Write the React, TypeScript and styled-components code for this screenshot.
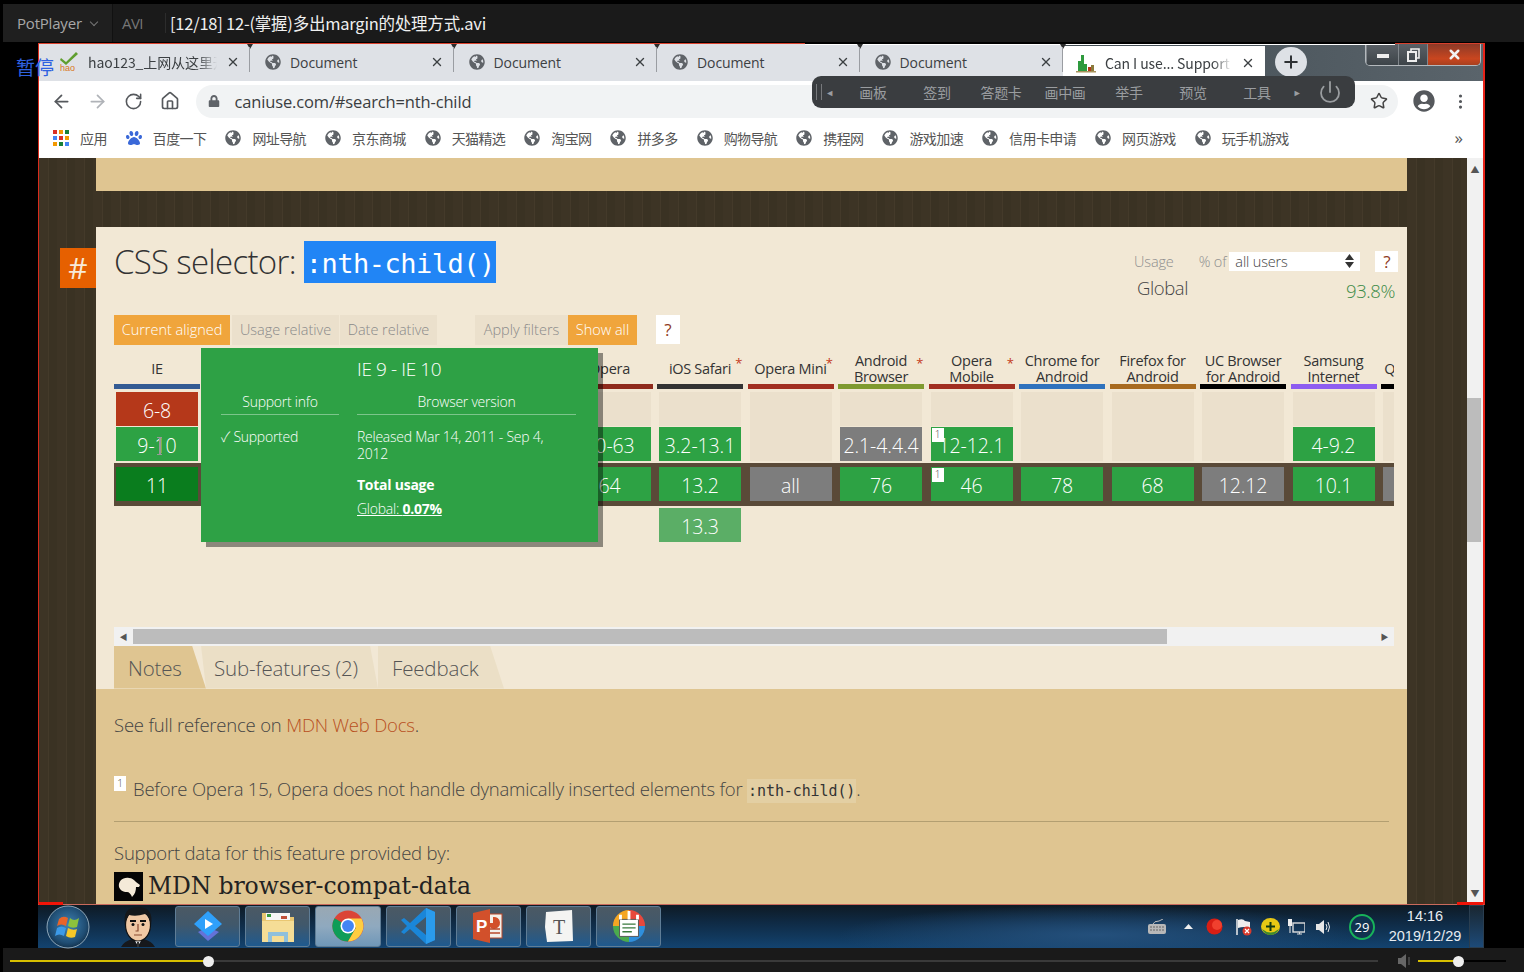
import React from "react";
import styled, { createGlobalStyle } from "styled-components";
import { ArrowLeft, ArrowRight, RotateCw, Home, Star, MoreVertical, Plus, X, Power } from "lucide-react";
import { FaGlobeAmericas, FaLock, FaUserCircle, FaPaw } from "react-icons/fa";

const SANS = `"Open Sans", "Noto Sans CJK SC", sans-serif`;
const CJK = `"Noto Sans CJK SC", "Open Sans", sans-serif`;

const GlobalStyle = createGlobalStyle`
  html, body { margin: 0; padding: 0; background: #000; }
  * { box-sizing: border-box; }
`;

const Screen = styled.div`
  position: relative;
  width: 1524px;
  height: 972px;
  background: #000;
  overflow: hidden;
  font-family: ${SANS};
`;

/* player title bar */
const TitleBar = styled.div`
  display: flex;
  align-items: center;
  height: 38px;
  margin: 4px 0 1px 3px;
  background: #1a1a1a;
  color: #fff;
`;
const PlayerMenu = styled.div`
  display: flex;
  align-items: center;
  gap: 9px;
  width: 110px;
  height: 100%;
  padding-left: 14px;
  background: #1f1f1f;
  border-right: 1px solid #111;
  color: #a8a8a8;
  font-size: 15px;
  letter-spacing: -0.2px;
`;
const Chevron = styled.span`
  width: 6px;
  height: 6px;
  margin-top: -3px;
  border-right: 1px solid #777;
  border-bottom: 1px solid #777;
  transform: rotate(45deg);
`;
const Format = styled.div`
  width: 44px;
  margin-left: 9px;
  border-right: 1px solid #2c2c2c;
  color: #767676;
  font-size: 15px;
  letter-spacing: -0.6px;
`;
const FileName = styled.div`
  margin-left: 4px;
  font-family: ${CJK};
  font-size: 16.5px;
  letter-spacing: -0.23px;
  color: #f0f0f0;
`;

/* captured desktop */
const Browser = styled.div`
  position: relative;
  display: flex;
  flex-direction: column;
  width: 1447px;
  height: 862px;
  margin-left: 38px;
  border-left: 1px solid #d92c1c;
  border-right: 2px solid #e8241a;
  border-top: 1.5px solid #d8402c;
  border-bottom: 1px solid #c96a5c;
  background: #fff;
`;
const CornerMark = styled.span<{ $side: "left" | "right" }>`
  position: absolute;
  bottom: -1px;
  ${(p) => p.$side}: 0;
  width: ${(p) => (p.$side === "left" ? 24 : 26)}px;
  height: 3px;
  background: #f01408;
`;
const RecordLine = styled.span`
  position: absolute;
  top: -1px;
  left: 766px;
  width: 590px;
  height: 2px;
  background: #fff;
  border-top: 1px solid #000;
`;

const TabStrip = styled.div`
  display: flex;
  height: 36.5px;
  background: linear-gradient(90deg, #1f2a31 0%, #4a565e 12%, #59646c 22%, #2d363c 45%, #3a444b 60%, #5a646b 100%);
`;
const TabRow = styled.div`
  display: flex;
  width: 1024px;
  padding-left: 21px;
  background: #dee1e6;
`;
const Tab = styled.div<{ $width: number }>`
  position: relative;
  display: flex;
  align-items: center;
  gap: 9px;
  width: ${(p) => p.$width}px;
  padding: 0 10px 0 15px;
  color: #3c4043;
  font-size: 14px;
  &::after {
    content: "";
    position: absolute;
    right: 0;
    top: 3px;
    bottom: 9px;
    width: 1px;
    background: #9a9da2;
  }
  &::before {
    content: "";
    position: absolute;
    right: -3px;
    top: 0;
    border: 3px solid transparent;
    border-top: 5px solid #2c2c2c;
    border-bottom: 0;
  }
`;
const FirstTab = styled(Tab)`
  padding-left: 0;
`;
const ActiveTab = styled.div`
  display: flex;
  align-items: center;
  gap: 9px;
  width: 202px;
  margin-top: 2px;
  padding: 0 10px 0 13px;
  background: #fff;
  color: #3c4043;
  font-size: 14px;
`;
const TabLabel = styled.span<{ $fade?: boolean }>`
  flex: 1;
  overflow: hidden;
  white-space: nowrap;
  letter-spacing: -0.1px;
  font-family: ${(p) => (p.$fade ? CJK : SANS)};
  ${(p) => p.$fade && "mask-image: linear-gradient(90deg, #000 85%, transparent 100%);"}
`;
const NewTab = styled.div`
  display: flex;
  align-items: center;
  justify-content: center;
  width: 32px;
  height: 30px;
  margin: 3px 0 0 10px;
  border-radius: 50%;
  background: #dee1e6;
  color: #2e3134;
`;
const WindowButtons = styled.div`
  display: flex;
  height: 22px;
  margin-left: auto;
  margin-right: 2px;
  border: 1px solid #b4b9bd;
  border-top: 0;
  border-radius: 0 0 5px 5px;
  overflow: hidden;
`;
const WindowButton = styled.div<{ $width: number; $close?: boolean }>`
  display: flex;
  align-items: center;
  justify-content: center;
  width: ${(p) => p.$width}px;
  border-left: 1px solid #80868b;
  background: ${(p) => (p.$close ? "linear-gradient(#8c3a28, #c9461f 70%, #a8401f)" : "linear-gradient(#5a6066, #3d4449)")};
  color: #f2f2f2;
`;
const MinimizeBar = styled.span`
  width: 12px;
  height: 4px;
  margin-top: 2px;
  background: #eee;
`;

const Toolbar = styled.div`
  display: flex;
  align-items: center;
  height: 41px;
  padding-left: 4px;
  background: #fff;
`;
const ToolButton = styled.div<{ $muted?: boolean }>`
  display: flex;
  align-items: center;
  justify-content: center;
  flex: none;
  width: 36.4px;
  color: ${(p) => (p.$muted ? "#b0b3b8" : "#55585c")};
`;
const AccountButton = styled(ToolButton)`
  margin-left: 8px;
`;
const Omnibox = styled.div`
  display: flex;
  align-items: center;
  gap: 15px;
  width: 1202px;
  height: 33px;
  margin-left: 7px;
  padding: 0 10px 0 12px;
  border-radius: 17px;
  background: #f1f3f4;
  color: #5f6368;
`;
const Url = styled.span`
  flex: 1;
  color: #3a3d40;
  font-size: 16.5px;
  letter-spacing: -0.15px;
`;
const Bookmarks = styled.div`
  display: flex;
  align-items: center;
  gap: 19px;
  height: 36px;
  padding: 0 0 4px 14px;
  background: #fff;
`;
const Bookmark = styled.div`
  display: flex;
  align-items: center;
  gap: 11px;
  flex: none;
  color: #555;
  font-family: ${CJK};
  font-size: 14px;
  letter-spacing: -0.6px;
`;
const More = styled.span`
  margin-left: auto;
  margin-right: 20px;
  color: #555;
  font-size: 17px;
`;

/* floating whiteboard bar and pause mark, both over the capture */
const FloatBar = styled.div`
  position: absolute;
  left: 773px;
  top: 32px;
  display: flex;
  align-items: center;
  width: 543px;
  height: 32px;
  padding-left: 4px;
  border-radius: 9px;
  background: #3a3d40;
  color: #9a9da0;
  font-family: ${CJK};
  font-size: 14px;
  letter-spacing: -0.3px;
`;
const FloatGrip = styled.span`
  width: 6px;
  height: 16px;
  border-left: 1px solid #77797c;
  border-right: 1px solid #77797c;
`;
const FloatArrow = styled.span<{ $width: number }>`
  width: ${(p) => p.$width}px;
  font-size: 9px;
  text-align: center;
`;
const FloatItem = styled.span`
  width: 64px;
  text-align: center;
  flex: none;
`;
const FirstFloatItem = styled(FloatItem)`
  margin-left: 4px;
`;
const FloatPower = styled(Power)`
  margin-left: 13px;
`;
const PauseMark = styled.div`
  position: absolute;
  left: 16px;
  top: 53px;
  color: #2f62e0;
  font-family: ${CJK};
  font-size: 19px;
  letter-spacing: 0;
`;

/* caniuse page */
const Page = styled.div`
  display: flex;
  flex: 1;
  min-height: 0;
  background: repeating-linear-gradient(90deg, #3d3425 0 9px, #443a2a 9px 10px, #3a3223 10px 18px);
`;
const Feed = styled.div`
  display: flex;
  flex-direction: column;
  gap: 36px;
  width: 1311px;
  margin-left: 57px;
  margin-right: 60px;
`;
const PreviousCard = styled.div`
  height: 33px;
  background: #dfc591;
`;
const Card = styled.section`
  position: relative;
  flex: 1;
  min-height: 0;
  display: flex;
  flex-direction: column;
  padding-top: 14px;
  background: #f2e8d5;
  overflow: visible;
`;
const Anchor = styled.div`
  position: absolute;
  left: -36px;
  top: 21px;
  display: flex;
  align-items: center;
  justify-content: center;
  width: 36px;
  height: 40px;
  background: #e66000;
  color: #f7ead8;
  font-size: 30px;
`;
const CardHead = styled.div`
  display: flex;
  justify-content: space-between;
  height: 74px;
  padding: 0 7px 0 18px;
`;
const Title = styled.h1`
  display: flex;
  align-items: center;
  gap: 8px;
  height: 42px;
  margin: 0;
  color: #333;
  font-size: 33px;
  font-weight: 300;
  letter-spacing: -0.7px;
`;
const Selected = styled.code`
  display: flex;
  align-items: center;
  height: 42px;
  padding: 4px 1px 0 2px;
  background: #2185f5;
  color: #fff;
  font-family: "DejaVu Sans Mono", monospace;
  font-size: 27px;
  font-weight: 400;
  letter-spacing: -0.5px;
`;
const UsageBox = styled.div`
  width: 266px;
  padding-top: 10px;
`;
const UsageRow = styled.div`
  display: flex;
  align-items: center;
  height: 21px;
  color: #8e8e8e;
  font-size: 14.5px;
  font-weight: 300;
  letter-spacing: -0.15px;
`;
const UsageOf = styled.span`
  margin-left: 25px;
  margin-right: 3px;
`;
const UserSelect = styled.div`
  display: flex;
  align-items: center;
  justify-content: space-between;
  width: 131px;
  height: 19px;
  padding: 0 6px;
  background: #fff;
  color: #444;
`;
const HelpBox = styled.div<{ $width: number; $height: number }>`
  display: flex;
  align-items: center;
  justify-content: center;
  width: ${(p) => p.$width}px;
  height: ${(p) => p.$height}px;
  background: #fff;
  color: #8f3a22;
  font-size: 17px;
  font-weight: 400;
`;
const UsageHelp = styled(HelpBox)`
  margin-left: 15px;
`;
const GlobalRow = styled.div`
  display: flex;
  justify-content: space-between;
  margin-top: 3px;
  padding: 0 5px 0 3px;
  color: #444;
  font-size: 18.5px;
  font-weight: 300;
  letter-spacing: -0.4px;
`;
const GlobalValue = styled.span`
  margin-top: 3px;
  color: #3d8b47;
`;
const Filters = styled.div`
  display: flex;
  height: 30px;
  padding-left: 18px;
`;
const FilterButton = styled.div<{ $on?: boolean; $width: number; $gap?: number }>`
  display: flex;
  align-items: center;
  justify-content: center;
  width: ${(p) => p.$width}px;
  margin-left: ${(p) => p.$gap ?? 0}px;
  background: ${(p) => (p.$on ? "#f0a53c" : "#ebe0cc")};
  color: ${(p) => (p.$on ? "#fff" : "#8a8a8a")};
  font-size: 14.5px;
  font-weight: 300;
  letter-spacing: -0.02px;
`;
const FilterHelp = styled(HelpBox)`
  margin-left: 19px;
`;

const TableArea = styled.div`
  position: relative;
  height: 282px;
`;
const Columns = styled.div`
  display: flex;
  width: 1282.25px;
  height: 100%;
  margin-left: 15.75px;
  overflow: hidden;
`;
const Column = styled.div`
  flex: none;
  width: 90.5px;
  padding: 0 2.25px;
`;
const ColumnName = styled.div`
  position: relative;
  display: flex;
  align-items: center;
  justify-content: center;
  height: 39px;
  padding-top: 10px;
  color: #333;
  font-size: 14.5px;
  line-height: 16px;
  letter-spacing: -0.3px;
  text-align: center;
  white-space: pre-line;
`;
const Asterisk = styled.span`
  position: absolute;
  right: 1px;
  top: 10px;
  color: #c43a20;
  font-size: 13px;
`;
const ColumnBar = styled.div<{ $color: string }>`
  height: 5px;
  margin-bottom: 3px;
  background: ${(p) => p.$color};
`;

type CellKind = "none" | "no" | "yes" | "grey" | "hover" | "future";
const CELL_COLORS: Record<CellKind, string> = {
  none: "#ebe0cc",
  no: "#b5381a",
  yes: "#2da244",
  grey: "#7d7d7d",
  hover: "#0a7d1e",
  future: "#5bae66",
};
const Cell = styled.div<{ $kind: CellKind; $tall?: boolean }>`
  position: relative;
  display: flex;
  align-items: center;
  justify-content: center;
  height: ${(p) => (p.$tall ? 69.5 : 34)}px;
  margin: 0 2px 1.5px;
  padding-top: 3px;
  background: ${(p) => CELL_COLORS[p.$kind]};
  color: #fff;
  font-size: 19.5px;
  font-weight: 300;
  letter-spacing: -0.1px;
  white-space: nowrap;
`;
const CurrentBand = styled.div<{ $first?: boolean }>`
  height: 43px;
  margin: 1px -2.25px 2px ${(p) => (p.$first ? 0 : -2.25)}px;
  padding: 4px 2.25px 0 ${(p) => (p.$first ? 0 : 2.25)}px;
  background: #5a4a38;
`;
const NoteBadge = styled.span`
  position: absolute;
  left: 1px;
  top: 1px;
  width: 12px;
  height: 14px;
  background: #fff;
  color: #444;
  font-size: 10px;
  line-height: 12px;
  text-align: center;
`;
const TextCursor = styled.span`
  position: absolute;
  left: 41px;
  top: 10px;
  width: 5px;
  height: 18px;
  border-top: 1px solid #999;
  border-bottom: 1px solid #999;
  &::after {
    content: "";
    display: block;
    width: 2px;
    height: 16px;
    margin-left: 1.5px;
    background: #999;
  }
`;

const Tooltip = styled.div`
  position: absolute;
  left: 105px;
  top: 3px;
  width: 397px;
  height: 194px;
  padding: 10px 22px 0 20px;
  background: #2ea145;
  box-shadow: 5px 5px 0 rgba(0, 0, 0, 0.42);
  color: #fff;
  font-size: 14px;
  font-weight: 300;
  letter-spacing: -0.25px;
`;
const TooltipTitle = styled.div`
  margin-left: 136px;
  font-size: 19px;
  line-height: 22px;
  letter-spacing: -0.4px;
`;
const TooltipBody = styled.div`
  display: grid;
  grid-template-columns: 118px 219px;
  column-gap: 18px;
  margin-top: 10px;
`;
const TooltipHead = styled.div`
  height: 25px;
  padding-top: 2px;
  border-bottom: 1px solid #7cc58b;
  line-height: 20px;
  text-align: center;
`;
const TooltipText = styled.div`
  margin-top: 13px;
  line-height: 17px;
`;
const TotalUsage = styled.div`
  margin-top: 14px;
  font-weight: 700;
  line-height: 17px;
`;
const GlobalLink = styled.div`
  margin-top: 7px;
  text-decoration: underline;
  line-height: 17px;
  b {
    font-weight: 700;
  }
`;

const HScroll = styled.div`
  display: flex;
  align-items: center;
  width: 1280px;
  height: 19px;
  margin-left: 18px;
  background: #f1f1f1;
  color: #555;
  font-size: 8px;
`;
const HArrow = styled.span`
  width: 19px;
  text-align: center;
`;
const HThumb = styled.div`
  width: 1034px;
  height: 15px;
  background: #bcbcbc;
`;
const HRest = styled.div`
  flex: 1;
`;
const TabsBar = styled.div`
  display: flex;
  height: 43px;
  padding-left: 18px;
`;
const NoteTab = styled.div<{ $active?: boolean; $width: number; $text: number; $pull?: number }>`
  flex: none;
  width: ${(p) => p.$width}px;
  margin-left: ${(p) => -(p.$pull ?? 0)}px;
  padding-left: ${(p) => p.$text}px;
  background: ${(p) => (p.$active ? "#dfc591" : "#ebdfc6")};
  clip-path: polygon(0 0, calc(100% - 14px) 0, 100% 100%, 0 100%);
  color: #555;
  font-size: 20.5px;
  font-weight: 300;
  line-height: 44px;
  letter-spacing: -0.15px;
`;
const SubTab = styled(NoteTab)`
  clip-path: polygon(0 0, calc(100% - 8px) 0, 100% 100%, 5px 100%);
`;
const Notes = styled.div`
  flex: 1;
  min-height: 0;
  padding: 24px 18px 0;
  background: #dfc591;
  color: #444;
  font-size: 18.5px;
  font-weight: 300;
  letter-spacing: -0.2px;
  overflow: hidden;
`;
const NoteLine = styled.p<{ $top?: number }>`
  display: flex;
  align-items: baseline;
  margin: ${(p) => p.$top ?? 0}px 0 0;
  line-height: 24px;
  white-space: pre;
`;
const MdnLink = styled.span`
  color: #b8501f;
`;
const Sup = styled.span`
  align-self: flex-start;
  width: 12px;
  height: 15px;
  margin: -1px 7px 0 0;
  background: #fff;
  color: #555;
  font-size: 11px;
  line-height: 14px;
  text-align: center;
`;
const InlineCode = styled.code`
  padding: 0 1px;
  background: #e3cfa3;
  color: #333;
  font-family: "DejaVu Sans Mono", monospace;
  font-size: 15px;
  font-weight: 400;
  letter-spacing: -0.1px;
`;
const Rule = styled.hr`
  height: 1px;
  margin: 18px 0 19px;
  border: 0;
  background: #b39f71;
`;
const Provider = styled.div`
  display: flex;
  align-items: center;
  gap: 5px;
  height: 29px;
  margin-top: 7px;
  color: #222;
  font-family: "DejaVu Serif", serif;
  font-size: 23.5px;
  letter-spacing: -0.1px;
`;

const PageScroll = styled.div`
  display: flex;
  flex-direction: column;
  flex: 1;
  padding-top: 5px;
  background: #f1f1f1;
  color: #555;
  font-size: 9px;
  text-align: center;
`;
const PageThumb = styled.div`
  height: 144px;
  margin: 222px 2px 0 0;
  background: #bcbcbc;
`;
const PageScrollEnd = styled.div`
  margin-top: auto;
  margin-bottom: 4px;
`;

/* taskbar */
const Taskbar = styled.div`
  display: flex;
  align-items: center;
  width: 1446px;
  height: 43px;
  margin-left: 38px;
  background:
    radial-gradient(ellipse 260px 30px at 1060px 30px, #24507c, transparent),
    linear-gradient(#0e1a24 0%, #0f2a44 40%, #13436f 100%);
`;
const Orb = styled.div`
  display: flex;
  margin-left: 8px;
`;
const Avatar = styled.div`
  display: flex;
  margin: 0 17px 0 28px;
`;
const TaskButton = styled.div<{ $active?: boolean }>`
  display: flex;
  align-items: center;
  justify-content: center;
  flex: none;
  width: 65.2px;
  height: 41px;
  margin: -1px 5px 0 0;
  border: 1px solid #5f7d96;
  border-radius: 3px;
  background: ${(p) =>
    p.$active ? "linear-gradient(#99a8b3, #8fa9bf 50%, #6f97b8)" : "linear-gradient(#4b5964, #41586b 45%, #1f5a8f)"};
`;
const Tray = styled.div`
  display: flex;
  align-items: center;
  margin-left: auto;
  height: 100%;
  color: #eee;
`;
const TrayIcon = styled.div<{ $gap: number }>`
  display: flex;
  margin-left: ${(p) => p.$gap}px;
`;
const ScoreBadge = styled.div`
  display: flex;
  align-items: center;
  justify-content: center;
  width: 26px;
  height: 26px;
  margin-left: 18px;
  border: 2.5px solid #18b35a;
  border-radius: 50%;
  background: #11324f;
  color: #fff;
  font-size: 13px;
`;
const Clock = styled.div`
  width: 76px;
  margin-left: 12px;
  margin-top: -2px;
  color: #e8edf2;
  font-family: "Liberation Sans", sans-serif;
  font-size: 14.5px;
  line-height: 20px;
  text-align: center;
  white-space: nowrap;
`;
const ShowDesktop = styled.div`
  width: 15px;
  height: 100%;
  margin-left: 6px;
  border: 1px solid #2a3e50;
  background: linear-gradient(#1a2731, #1d4a78);
`;

/* player seek bar */
const SeekBar = styled.div`
  display: flex;
  align-items: center;
  height: 24px;
  margin-left: 3px;
  padding: 2px 0 0 7px;
  background: #1a1a1a;
`;
const Progress = styled.div<{ $width: number; $color: string }>`
  flex: none;
  width: ${(p) => p.$width}px;
  height: 2px;
  background: ${(p) => p.$color};
`;
const Knob = styled.span<{ $size: number }>`
  flex: none;
  width: ${(p) => p.$size}px;
  height: ${(p) => p.$size}px;
  margin: 0 -2px;
  border-radius: 50%;
  background: #eee;
  z-index: 1;
`;
const VolumeIcon = styled.div`
  display: flex;
  margin: 0 5px 0 19px;
`;

const Globe = () => <FaGlobeAmericas size={16} color="#5f6368" />;

const HaoIcon = () => (
  <svg width="19" height="20" viewBox="0 0 19 20">
    <path d="M1 6 L6 10 L16 0 L18 2 L6 13 L0 8 Z" fill="#5f9e2f" />
    <text x="0" y="19" fontSize="9" fontFamily="Liberation Sans, sans-serif" fill="#d9781c">hao</text>
  </svg>
);

const CanIUseIcon = () => (
  <svg width="20" height="20" viewBox="0 0 20 20">
    <rect x="0" y="18" width="20" height="1.5" fill="#a8935c" />
    <rect x="2" y="8" width="3" height="10" fill="#2e9a3e" />
    <rect x="5" y="2" width="3" height="16" fill="#2e9a3e" />
    <rect x="8" y="11" width="3" height="7" fill="#2e9a3e" />
    <rect x="12" y="14" width="3" height="4" fill="#b5381a" />
    <rect x="15" y="12" width="3" height="6" fill="#8a7a3c" />
  </svg>
);

const AppsIcon = () => {
  const colors = ["#d93025", "#f29900", "#188038", "#4285f4", "#d93025", "#f29900", "#f29900", "#188038", "#4285f4"];
  return (
    <svg width="16" height="16" viewBox="0 0 16 16">
      {colors.map((c, i) => (
        <rect key={i} x={(i % 3) * 6} y={Math.floor(i / 3) * 6} width="4" height="4" fill={c} />
      ))}
    </svg>
  );
};

const SortArrows = () => (
  <svg width="9" height="14" viewBox="0 0 9 14">
    <path d="M4.5 0 L9 6 H0 Z M0 8 H9 L4.5 14 Z" fill="#333" />
  </svg>
);

const MdnLogo = () => (
  <svg width="29" height="29" viewBox="0 0 29 29">
    <rect width="29" height="29" fill="#050505" />
    <path d="M5 15 C4 9 9 5 15 6 C18 6 20 8 22 10 L26 13 L25 15 L22 15 C22 19 21 22 18 25 C17 22 15 20 13 20 C9 20 6 18 5 15 Z" fill="#f4ead8" />
  </svg>
);

const RestoreGlyph = () => (
  <svg width="13" height="14" viewBox="0 0 13 14">
    <path d="M4 3 V1 H12 V10 H9" fill="none" stroke="#eee" strokeWidth="1.6" />
    <rect x="1" y="4" width="8" height="9" fill="none" stroke="#eee" strokeWidth="2" />
  </svg>
);

const WindowsOrb = () => (
  <svg width="44" height="44" viewBox="0 0 44 44">
    <defs>
      <radialGradient id="orb" cx="50%" cy="45%" r="60%">
        <stop offset="0%" stopColor="#3f83b5" />
        <stop offset="70%" stopColor="#204e74" />
        <stop offset="100%" stopColor="#0f2a42" />
      </radialGradient>
    </defs>
    <circle cx="22" cy="22" r="21" fill="url(#orb)" stroke="#8fa8ba" strokeWidth="1" />
    <path d="M13 14 Q17 10 22 13 L20 21 Q15 18 11 21 Z" fill="#e8642a" />
    <path d="M24 13 Q28 17 33 13 L31 22 Q26 24 22 21 Z" fill="#8cc23c" />
    <path d="M11 23 Q15 20 20 23 L18 31 Q13 28 9 31 Z" fill="#3c9ae8" />
    <path d="M22 23 Q27 26 31 24 L29 32 Q24 34 20 31 Z" fill="#f6c828" />
  </svg>
);

const FaceAvatar = () => (
  <svg width="40" height="42" viewBox="0 0 40 42">
    <path d="M3 41 Q6 35 15 33 L25 33 Q34 35 37 41 Z" fill="#16181c" />
    <path d="M16 33 L20 40 L24 33 Z" fill="#fff" />
    <path d="M19 36 L21 36 L21 41 L19 41 Z" fill="#333" />
    <ellipse cx="20" cy="19" rx="12.5" ry="16" fill="#f0c8a4" stroke="#111" strokeWidth="1.2" />
    <path d="M7 19 Q4 1 20 1 Q36 1 33 19 Q31 10 27 8 Q18 11 11 9 Q8 13 7 19 Z" fill="#15171a" />
    <path d="M12 15 h6 M22 15 h6" stroke="#111" strokeWidth="1.8" />
    <circle cx="15" cy="18.5" r="1.5" fill="#111" />
    <circle cx="25" cy="18.5" r="1.5" fill="#111" />
    <path d="M20 18 v7 h-2.5 M16 29 h8" stroke="#8a4a30" strokeWidth="1.2" fill="none" />
  </svg>
);

const DiamondApp = () => (
  <svg width="32" height="32" viewBox="0 0 32 32">
    <path d="M16 17 L27 22 L16 31 L6 22 Z" fill="#6472d8" />
    <path d="M16 1 L30 14 L16 26 L2 14 Z" fill="#2fa0fa" />
    <path d="M13 9 L21 14 L13 19 Z" fill="#fff" />
  </svg>
);

const FolderApp = () => (
  <svg width="34" height="34" viewBox="0 0 34 34">
    <path d="M1 4 H13 L16 8 H33 V33 H1 Z" fill="#e9c772" />
    <rect x="5" y="4" width="24" height="7" fill="#f6f6f6" />
    <rect x="6" y="5" width="4" height="3" fill="#3a9a3e" />
    <rect x="20" y="7" width="6" height="3" fill="#c0503a" />
    <path d="M1 12 H33 V33 H1 Z" fill="#f5dd96" />
    <path d="M7 33 V23 H27 V33 H23 V27 H11 V33 Z" fill="#8fc0dc" />
  </svg>
);

const ChromeApp = () => (
  <svg width="32" height="32" viewBox="0 0 34 34">
    <circle cx="17" cy="17" r="16.5" fill="#db4437" />
    <path d="M17 17 L2.7 8.7 A16.5 16.5 0 0 0 17 33.5 L25.3 19 Z" fill="#0f9d58" />
    <path d="M17 9 H31.3 A16.5 16.5 0 0 1 17 33.5 L25.3 19 Z" fill="#ffcd40" />
    <circle cx="17" cy="17" r="8" fill="#fff" />
    <circle cx="17" cy="17" r="6.3" fill="#4285f4" />
  </svg>
);

const CodeApp = () => (
  <svg width="36" height="38" viewBox="0 0 36 38">
    <path d="M26 1 L35 5 V33 L26 37 L10 22 L4 27 L1 25 L7 19 L1 13 L4 11 L10 16 Z M26 10 L15 19 L26 28 Z" fillRule="evenodd" fill="#1a86d8" />
    <path d="M26 1 L35 5 V33 L26 37 Z" fill="#2a9bec" />
  </svg>
);

const SlidesApp = () => (
  <svg width="30" height="34" viewBox="0 0 30 34">
    <rect x="13" y="5" width="16" height="24" fill="#f3efe9" stroke="#b9482a" />
    <path d="M20 8 A6 6 0 1 1 15 14 L20 14 Z" fill="#d2502b" />
    <path d="M16 20 H27 M16 24 H27" stroke="#b9482a" strokeWidth="1.5" />
    <path d="M0 4 L17 0 V34 L0 30 Z" fill="#d2502b" />
    <text x="3" y="23" fontSize="17" fontWeight="700" fontFamily="Liberation Sans, sans-serif" fill="#fff">P</text>
  </svg>
);

const TextApp = () => (
  <svg width="30" height="32" viewBox="0 0 30 32">
    <path d="M2 2 L28 0 L29 31 L3 32 L1 17 Z" fill="#f4f4f2" />
    <text x="15" y="24" textAnchor="middle" fontSize="20" fontFamily="Liberation Serif, serif" fill="#555">T</text>
  </svg>
);

const NoteApp = () => (
  <svg width="34" height="36" viewBox="0 0 36 38">
    <path d="M18 19 L18 2 A17 17 0 0 1 35 19 Z" fill="#e8483c" />
    <path d="M18 19 L35 19 A17 17 0 0 1 18 36 Z" fill="#2f8fdc" />
    <path d="M18 19 L18 36 A17 17 0 0 1 1 19 Z" fill="#4bab4e" />
    <path d="M18 19 L1 19 A17 17 0 0 1 18 2 Z" fill="#f5a623" />
    <rect x="8" y="12" width="20" height="18" fill="#fff" stroke="#555" />
    <path d="M11 17 H25 M11 21 H25 M11 25 H21" stroke="#3a7a3e" strokeWidth="1.5" />
    <path d="M9 7 v5 M18 3 v9 M27 7 v5" stroke="#fff" strokeWidth="3" />
  </svg>
);

const KeyboardTray = () => (
  <svg width="18" height="16" viewBox="0 0 18 16">
    <path d="M5 5 Q6 2 11 2 L15 0" stroke="#bbb" fill="none" />
    <rect x="0" y="5" width="18" height="10" rx="2" fill="#b8b8b8" />
    <path d="M2 8 H16 M2 11 H16" stroke="#666" strokeDasharray="2 1" />
  </svg>
);

const FlagTray = () => (
  <svg width="18" height="18" viewBox="0 0 18 18">
    <path d="M2 1 V17" stroke="#eee" strokeWidth="1.5" />
    <path d="M3 2 Q8 0 10 3 L15 4 V10 Q9 8 3 10 Z" fill="#eee" />
    <circle cx="12" cy="13" r="4.5" fill="#d83a2c" />
    <path d="M10 11 L14 15 M14 11 L10 15" stroke="#fff" strokeWidth="1.2" />
  </svg>
);

const PlusTray = () => (
  <svg width="19" height="17" viewBox="0 0 19 17">
    <ellipse cx="9.5" cy="8.5" rx="9.5" ry="8.5" fill="#e8c814" />
    <path d="M1 11 Q9.5 18 18 11 Q15 17 9.5 17 Q4 17 1 11 Z" fill="#3e8a2e" />
    <path d="M5 8.5 H14 M9.5 4 V13" stroke="#143a10" strokeWidth="2" />
  </svg>
);

const NetworkTray = () => (
  <svg width="18" height="18" viewBox="0 0 18 18">
    <rect x="6" y="5" width="12" height="9" fill="none" stroke="#ddd" strokeWidth="1.4" />
    <path d="M10 16 H15 M12.5 14 V16" stroke="#ddd" />
    <rect x="1" y="1" width="4" height="7" fill="#eee" />
    <path d="M3 8 V15" stroke="#eee" />
  </svg>
);

const SpeakerTray = ({ color, arcs }: { color: string; arcs: boolean }) => (
  <svg width="16" height="16" viewBox="0 0 16 16">
    <path d="M1 5 H4 L9 1 V15 L4 11 H1 Z" fill={color} />
    {arcs ? <path d="M11 5 Q13 8 11 11 M13 3 Q16 8 13 13" stroke={color} fill="none" /> : <path d="M12 4 V12" stroke={color} />}
  </svg>
);

type BrowserColumn = {
  name: string;
  bar: string;
  star?: boolean;
  before: { label?: string; kind: CellKind; tall?: boolean; note?: boolean; cursor?: boolean }[];
  current: { label: string; kind: CellKind; note?: boolean };
  after?: { label: string; kind: CellKind };
};

const EMPTY_TWO = [{ kind: "none" as CellKind, tall: true }];

const COLUMNS: BrowserColumn[] = [
  {
    name: "IE",
    bar: "#345b93",
    before: [
      { label: "6-8", kind: "no" },
      { label: "9-10", kind: "yes", cursor: true },
    ],
    current: { label: "11", kind: "hover" },
  },
  { name: "", bar: "#2f72bd", before: EMPTY_TWO, current: { label: "", kind: "yes" }, after: { label: "", kind: "yes" } },
  { name: "", bar: "#a86a1f", before: EMPTY_TWO, current: { label: "", kind: "yes" }, after: { label: "", kind: "yes" } },
  { name: "", bar: "#2f72bd", before: EMPTY_TWO, current: { label: "", kind: "yes" }, after: { label: "", kind: "yes" } },
  { name: "", bar: "#2f72bd", before: EMPTY_TWO, current: { label: "", kind: "yes" }, after: { label: "", kind: "yes" } },
  {
    name: "Opera",
    bar: "#8f2a1c",
    before: [{ kind: "none" }, { label: "10-63", kind: "yes" }],
    current: { label: "64", kind: "yes" },
  },
  {
    name: "iOS Safari",
    bar: "#333",
    star: true,
    before: [{ kind: "none" }, { label: "3.2-13.1", kind: "yes" }],
    current: { label: "13.2", kind: "yes" },
    after: { label: "13.3", kind: "future" },
  },
  { name: "Opera Mini", bar: "#a12e20", star: true, before: EMPTY_TWO, current: { label: "all", kind: "grey" } },
  {
    name: "Android\nBrowser",
    bar: "#7f9a2f",
    star: true,
    before: [{ kind: "none" }, { label: "2.1-4.4.4", kind: "grey" }],
    current: { label: "76", kind: "yes" },
  },
  {
    name: "Opera\nMobile",
    bar: "#a12e20",
    star: true,
    before: [{ kind: "none" }, { label: "12-12.1", kind: "yes", note: true }],
    current: { label: "46", kind: "yes", note: true },
  },
  { name: "Chrome for\nAndroid", bar: "#2f72bd", before: EMPTY_TWO, current: { label: "78", kind: "yes" } },
  { name: "Firefox for\nAndroid", bar: "#a86a1f", before: EMPTY_TWO, current: { label: "68", kind: "yes" } },
  { name: "UC Browser\nfor Android", bar: "#000", before: EMPTY_TWO, current: { label: "12.12", kind: "grey" } },
  {
    name: "Samsung\nInternet",
    bar: "#8d5cf0",
    before: [{ kind: "none" }, { label: "4-9.2", kind: "yes" }],
    current: { label: "10.1", kind: "yes" },
  },
  { name: "QQ Browser", bar: "#000", before: EMPTY_TWO, current: { label: "", kind: "grey" } },
];

const BOOKMARKS = ["网址导航", "京东商城", "天猫精选", "淘宝网", "拼多多", "购物导航", "携程网", "游戏加速", "信用卡申请", "网页游戏", "玩手机游戏"];
const FLOAT_ITEMS = ["签到", "答题卡", "画中画", "举手", "预览", "工具"];

const BrowserTable = () => (
  <TableArea>
    <Columns>
      {COLUMNS.map((col, i) => (
        <Column key={i}>
          <ColumnName>
            {col.name}
            {col.star && <Asterisk>*</Asterisk>}
          </ColumnName>
          <ColumnBar $color={col.bar} />
          {col.before.map((c, j) => (
            <Cell key={j} $kind={c.kind} $tall={c.tall}>
              {c.label}
              {c.note && <NoteBadge>1</NoteBadge>}
              {c.cursor && <TextCursor />}
            </Cell>
          ))}
          <CurrentBand $first={i === 0}>
            <Cell $kind={col.current.kind}>
              {col.current.label}
              {col.current.note && <NoteBadge>1</NoteBadge>}
            </Cell>
          </CurrentBand>
          {col.after && <Cell $kind={col.after.kind}>{col.after.label}</Cell>}
        </Column>
      ))}
    </Columns>
    <Tooltip>
      <TooltipTitle>IE 9 - IE 10</TooltipTitle>
      <TooltipBody>
        <div>
          <TooltipHead>Support info</TooltipHead>
          <TooltipText>✓ Supported</TooltipText>
        </div>
        <div>
          <TooltipHead>Browser version</TooltipHead>
          <TooltipText>
            Released Mar 14, 2011 - Sep 4,
            <br />
            2012
          </TooltipText>
          <TotalUsage>Total usage</TotalUsage>
          <GlobalLink>
            Global: <b>0.07%</b>
          </GlobalLink>
        </div>
      </TooltipBody>
    </Tooltip>
  </TableArea>
);

export default function App() {
  return (
    <Screen>
      <GlobalStyle />
      <TitleBar>
        <PlayerMenu>
          PotPlayer <Chevron />
        </PlayerMenu>
        <Format>AVI</Format>
        <FileName>[12/18] 12-(掌握)多出margin的处理方式.avi</FileName>
      </TitleBar>

      <Browser>
        <RecordLine />
        <TabStrip>
          <TabRow>
            <FirstTab $width={190}>
              <HaoIcon />
              <TabLabel $fade>hao123_上网从这里开始</TabLabel>
              <X size={14} strokeWidth={2.4} />
            </FirstTab>
            {[0, 1, 2, 3].map((i) => (
              <Tab key={i} $width={i === 2 ? 203 : 204}>
                <Globe />
                <TabLabel>Document</TabLabel>
                <X size={14} strokeWidth={2.4} />
              </Tab>
            ))}
          </TabRow>
          <ActiveTab>
            <CanIUseIcon />
            <TabLabel $fade>Can I use... Support tables</TabLabel>
            <X size={14} strokeWidth={2.4} />
          </ActiveTab>
          <NewTab>
            <Plus size={20} strokeWidth={2.4} />
          </NewTab>
          <WindowButtons>
            <WindowButton $width={32}><MinimizeBar /></WindowButton>
            <WindowButton $width={29}><RestoreGlyph /></WindowButton>
            <WindowButton $width={53} $close><X size={15} strokeWidth={4} /></WindowButton>
          </WindowButtons>
        </TabStrip>

        <Toolbar>
          <ToolButton><ArrowLeft size={21} /></ToolButton>
          <ToolButton $muted><ArrowRight size={21} /></ToolButton>
          <ToolButton><RotateCw size={19} /></ToolButton>
          <ToolButton><Home size={20} /></ToolButton>
          <Omnibox>
            <FaLock size={12} />
            <Url>caniuse.com/#search=nth-child</Url>
            <Star size={18} color="#444" />
          </Omnibox>
          <AccountButton><FaUserCircle size={22} /></AccountButton>
          <ToolButton><MoreVertical size={19} /></ToolButton>
        </Toolbar>

        <Bookmarks>
          <Bookmark><AppsIcon />应用</Bookmark>
          <Bookmark><FaPaw size={16} color="#3a68d8" />百度一下</Bookmark>
          {BOOKMARKS.map((b) => (
            <Bookmark key={b}><Globe />{b}</Bookmark>
          ))}
          <More>»</More>
        </Bookmarks>

        <Page>
          <Feed>
            <PreviousCard />
            <Card>
              <Anchor>#</Anchor>
              <CardHead>
                <Title>
                  CSS selector: <Selected>:nth-child()</Selected>
                </Title>
                <UsageBox>
                  <UsageRow>
                    Usage
                    <UsageOf>% of</UsageOf>
                    <UserSelect>
                      all users
                      <SortArrows />
                    </UserSelect>
                    <UsageHelp $width={23} $height={21}>?</UsageHelp>
                  </UsageRow>
                  <GlobalRow>
                    Global
                    <GlobalValue>93.8%</GlobalValue>
                  </GlobalRow>
                </UsageBox>
              </CardHead>
              <Filters>
                <FilterButton $on $width={116}>Current aligned</FilterButton>
                <FilterButton $width={107} $gap={2}>Usage relative</FilterButton>
                <FilterButton $width={97} $gap={1}>Date relative</FilterButton>
                <FilterButton $width={93} $gap={38}>Apply filters</FilterButton>
                <FilterButton $on $width={69}>Show all</FilterButton>
                <FilterHelp $width={24} $height={29}>?</FilterHelp>
              </Filters>
              <BrowserTable />
              <HScroll>
                <HArrow>◀</HArrow>
                <HThumb />
                <HRest />
                <HArrow>▶</HArrow>
              </HScroll>
              <TabsBar>
                <NoteTab $active $width={92} $text={14}>Notes</NoteTab>
                <SubTab $width={177} $text={13} $pull={5}>Sub-features (2)</SubTab>
                <NoteTab $width={126} $text={14}>Feedback</NoteTab>
              </TabsBar>
              <Notes>
                <NoteLine>
                  See full reference on <MdnLink>MDN Web Docs</MdnLink>.
                </NoteLine>
                <NoteLine $top={40}>
                  <Sup>1</Sup>Before Opera 15, Opera does not handle dynamically inserted elements for{" "}
                  <InlineCode>:nth-child()</InlineCode>.
                </NoteLine>
                <Rule />
                <NoteLine>Support data for this feature provided by:</NoteLine>
                <Provider>
                  <MdnLogo />
                  MDN browser-compat-data
                </Provider>
              </Notes>
            </Card>
          </Feed>
          <PageScroll>
            ▲
            <PageThumb />
            <PageScrollEnd>▼</PageScrollEnd>
          </PageScroll>
        </Page>

        <FloatBar>
          <FloatGrip />
          <FloatArrow $width={15}>◄</FloatArrow>
          <FirstFloatItem>画板</FirstFloatItem>
          {FLOAT_ITEMS.map((item) => (
            <FloatItem key={item}>{item}</FloatItem>
          ))}
          <FloatArrow $width={16}>►</FloatArrow>
          <FloatPower size={24} strokeWidth={1.8} />
        </FloatBar>
        <CornerMark $side="left" />
        <CornerMark $side="right" />
      </Browser>

      <PauseMark>暂停</PauseMark>

      <Taskbar>
        <Orb><WindowsOrb /></Orb>
        <Avatar><FaceAvatar /></Avatar>
        <TaskButton><DiamondApp /></TaskButton>
        <TaskButton><FolderApp /></TaskButton>
        <TaskButton $active><ChromeApp /></TaskButton>
        <TaskButton><CodeApp /></TaskButton>
        <TaskButton><SlidesApp /></TaskButton>
        <TaskButton><TextApp /></TaskButton>
        <TaskButton><NoteApp /></TaskButton>
        <Tray>
          <TrayIcon $gap={0}><KeyboardTray /></TrayIcon>
          <TrayIcon $gap={18}><svg width="9" height="5" viewBox="0 0 9 5"><path d="M4.5 0 L9 5 H0 Z" fill="#eee" /></svg></TrayIcon>
          <TrayIcon $gap={13}><svg width="17" height="17" viewBox="0 0 17 17"><circle cx="8.5" cy="8.5" r="8" fill="#d81e14" /><circle cx="11" cy="7" r="5" fill="#f0402e" /></svg></TrayIcon>
          <TrayIcon $gap={12}><FlagTray /></TrayIcon>
          <TrayIcon $gap={8}><PlusTray /></TrayIcon>
          <TrayIcon $gap={7}><NetworkTray /></TrayIcon>
          <TrayIcon $gap={10}><SpeakerTray color="#e6e6e6" arcs /></TrayIcon>
          <ScoreBadge>29</ScoreBadge>
          <Clock>
            14:16
            <br />
            2019/12/29
          </Clock>
          <ShowDesktop />
        </Tray>
      </Taskbar>

      <SeekBar>
        <Progress $width={195} $color="#d8c000" />
        <Knob $size={11} />
        <Progress $width={1166} $color="#3a3a3a" />
        <VolumeIcon><SpeakerTray color="#666" arcs={false} /></VolumeIcon>
        <Progress $width={37} $color="#d8c000" />
        <Knob $size={11} />
        <Progress $width={44} $color="#000" />
      </SeekBar>
    </Screen>
  );
}
